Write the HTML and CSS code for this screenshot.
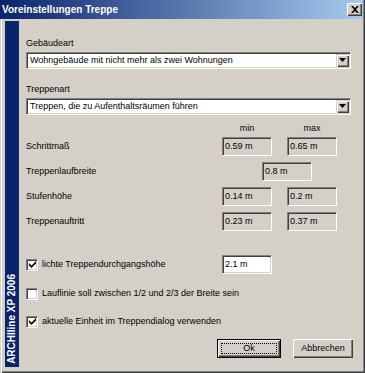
FILE: index.html
```html
<!DOCTYPE html>
<html lang="de">
<head>
<meta charset="utf-8">
<title>Voreinstellungen Treppe</title>
<link rel="stylesheet" href="styles.css">
</head>
<body>
<div class="window">
  <div class="titlebar">
    <span class="title">Voreinstellungen Treppe</span>
    <span class="close"><svg width="8" height="7" viewBox="0 0 8 7"><path d="M0 0h2l2 2 2-2h2L5 3.5 8 7H6L4 5 2 7H0l3-3.5z" fill="#000"/></svg></span>
  </div>
  <div class="main">
    <div class="sidebar"><span class="brand">ARCHIline XP 2006</span></div>
    <div class="content">
      <div class="lbl first">Gebäudeart</div>
      <div class="combo"><span class="combo-text">Wohngebäude mit nicht mehr als zwei Wohnungen</span><span class="arrow"><svg width="7" height="5" viewBox="0 0 7 5"><path d="M0 0h7L3.5 4z" fill="#000"/></svg></span></div>
      <div class="lbl second">Treppenart</div>
      <div class="combo"><span class="combo-text">Treppen, die zu Aufenthaltsräumen führen</span><span class="arrow"><svg width="7" height="5" viewBox="0 0 7 5"><path d="M0 0h7L3.5 4z" fill="#000"/></svg></span></div>

      <div class="grid hdr">
        <span class="col2 center">min</span>
        <span class="col4 center">max</span>
      </div>
      <div class="grid rows">
        <span class="rlbl">Schrittmaß</span>
        <span class="field col2">0.59 m</span>
        <span class="field col4">0.65 m</span>

        <span class="rlbl">Treppenlaufbreite</span>
        <span class="field wide">0.8 m</span>

        <span class="rlbl">Stufenhöhe</span>
        <span class="field col2">0.14 m</span>
        <span class="field col4">0.2 m</span>

        <span class="rlbl">Treppenauftritt</span>
        <span class="field col2">0.23 m</span>
        <span class="field col4">0.37 m</span>
      </div>

      <div class="grid chk-row r1">
        <span class="chk"><span class="box"><svg width="7" height="7" viewBox="0 0 7 7"><path d="M0 2l2.5 2.5L7 0v2.6L2.5 7 0 4.6z" fill="#000"/></svg></span><span>lichte Treppendurchgangshöhe</span></span>
        <span class="field edit col2">2.1 m</span>
      </div>
      <div class="chk-row r2">
        <span class="chk"><span class="box"></span><span>Lauflinie soll zwischen 1/2 und 2/3 der Breite sein</span></span>
      </div>
      <div class="chk-row r3">
        <span class="chk"><span class="box"><svg width="7" height="7" viewBox="0 0 7 7"><path d="M0 2l2.5 2.5L7 0v2.6L2.5 7 0 4.6z" fill="#000"/></svg></span><span>aktuelle Einheit im Treppendialog verwenden</span></span>
      </div>

      <div class="buttons">
        <span class="btn default"><span class="focus">Ok</span></span>
        <span class="btn cancel">Abbrechen</span>
      </div>
    </div>
  </div>
</div>
</body>
</html>
```

FILE: styles.css
```css
* { box-sizing: border-box; }
html, body { margin: 0; padding: 0; }
body {
  width: 365px;
  height: 373px;
  overflow: hidden;
  background: #d4d0c8;
  font-family: "Liberation Sans", Arial, sans-serif;
  font-size: 9px;
  color: #000;
}
.window {
  width: 365px;
  height: 373px;
  display: flex;
  flex-direction: column;
  background: #d4d0c8;
  box-shadow: inset 1px 0 0 #d4d0c8, inset 2px 0 0 #ffffff, inset -1px -1px 0 #404040, inset -2px -2px 0 #808080;
}
.titlebar {
  height: 19px;
  margin-right: 2px;
  display: flex;
  align-items: center;
  justify-content: space-between;
  padding: 0 1px 0 2px;
  background: linear-gradient(to right, #0a246a, #a6caf0);
}
.title {
  color: #fff;
  font-weight: bold;
  font-size: 10px;
  line-height: 12px;
}
.close {
  width: 15px;
  height: 13px;
  display: flex;
  align-items: center;
  justify-content: center;
  background: #d4d0c8;
  box-shadow: inset 1px 1px 0 #ffffff, inset -1px -1px 0 #404040, inset -2px -2px 0 #808080;
}
.main {
  flex: 1;
  display: flex;
  padding: 2px 0 6px 5px;
}
.sidebar {
  width: 14px;
  background: #0a246a;
  display: flex;
  flex-direction: column;
  justify-content: flex-end;
  align-items: center;
  padding-bottom: 3px;
}
.brand {
  writing-mode: vertical-rl;
  transform: rotate(180deg);
  color: #fff;
  font-weight: bold;
  font-size: 10px;
  line-height: 12px;
  white-space: nowrap;
}
.content {
  flex: 1;
  display: flex;
  flex-direction: column;
  padding: 0 14px 0 7px;
}
.lbl { line-height: 13px; height: 13px; }
.lbl.first { margin-top: 16px; margin-bottom: 2px; }
.lbl.second { margin-top: 14px; margin-bottom: 2px; }
.combo {
  height: 17px;
  background: #fff;
  border: 1px solid;
  border-color: #808080 #ffffff #ffffff #808080;
  box-shadow: inset 1px 1px 0 #404040, inset -1px -1px 0 #d4d0c8;
  display: flex;
  align-items: stretch;
  padding: 1px;
}
.combo-text {
  flex: 1;
  padding-left: 2px;
  line-height: 13px;
  white-space: nowrap;
}
.arrow {
  width: 13px;
  background: #d4d0c8;
  box-shadow: inset 1px 1px 0 #d4d0c8, inset 2px 2px 0 #ffffff, inset -1px -1px 0 #404040, inset -2px -2px 0 #808080;
  display: flex;
  align-items: center;
  justify-content: center;
}
.grid {
  display: grid;
  grid-template-columns: 196px 50px 15px 50px;
}
.hdr {
  margin-top: 7px;
  height: 13px;
  line-height: 13px;
  margin-bottom: 2px;
}
.rows {
  grid-template-rows: repeat(4, 19px);
  row-gap: 6px;
}
.col2 { grid-column: 2; }
.col4 { grid-column: 4; }
.center { text-align: center; }
.rlbl { grid-column: 1; align-self: center; line-height: 13px; }
.field {
  height: 19px;
  width: 50px;
  border: 1px solid;
  border-color: #808080 #ffffff #ffffff #808080;
  box-shadow: inset 1px 1px 0 #404040, inset -1px -1px 0 #d4d0c8;
  padding: 0 2px;
  line-height: 17px;
  white-space: nowrap;
}
.field.wide { grid-column: 2 / 5; margin-left: 40px; }
.field.edit { background: #fff; }
.chk-row { display: grid; grid-template-columns: 196px 50px; align-items: center; }
.chk-row.r1 { margin-top: 24px; height: 19px; }
.chk-row.r2 { margin-top: 13px; height: 12px; }
.chk-row.r3 { margin-top: 16px; height: 12px; }
.chk {
  display: flex;
  align-items: center;
  gap: 4px;
  line-height: 13px;
  white-space: nowrap;
}
.box {
  width: 12px;
  height: 12px;
  flex: none;
  background: #fff;
  border: 1px solid;
  border-color: #808080 #ffffff #ffffff #808080;
  box-shadow: inset 1px 1px 0 #404040, inset -1px -1px 0 #d4d0c8;
  display: flex;
  align-items: center;
  justify-content: center;
}
.buttons {
  margin-top: 12px;
  margin-right: -2px;
  display: flex;
  justify-content: flex-end;
  gap: 12px;
}
.btn {
  height: 19px;
  display: flex;
  align-items: center;
  justify-content: center;
  background: #d4d0c8;
  box-shadow: inset 1px 1px 0 #ffffff, inset -1px -1px 0 #404040, inset -2px -2px 0 #808080;
  line-height: 13px;
}
.btn.default {
  width: 64px;
  border: 1px solid #000;
  padding: 3px;
  align-items: stretch;
}
.focus {
  flex: 1;
  border: 1px dotted #000;
  display: flex;
  align-items: center;
  justify-content: center;
}
.btn.cancel { width: 60px; }
```
